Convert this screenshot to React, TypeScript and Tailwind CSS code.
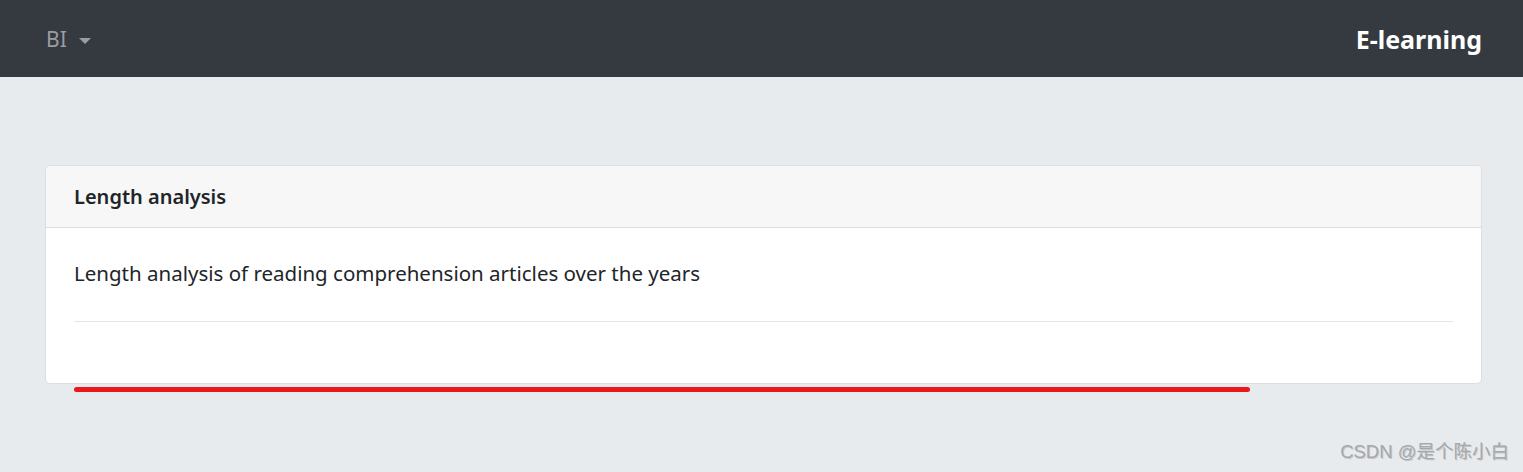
import React from "react";

export default function App() {
  return (
    <div className="w-[1523px] h-[472px] bg-[#e7ebee] flex flex-col relative" style={{ fontFamily: '"Noto Sans", "Open Sans", sans-serif' }}>
      <nav className="h-[77px] bg-[#343a40] flex items-center justify-between pl-[46px] pr-[41px] pt-[3px] shrink-0">
        <div className="flex items-center gap-[12px] text-[#9a9da1] text-[21px]">
          <span>BI</span>
          <span className="w-0 h-0 border-l-[6px] border-r-[6px] border-t-[6px] border-l-transparent border-r-transparent border-t-[#9a9da1] mt-[1px]" />
        </div>
        <div className="text-white text-[25px] font-bold">E-learning</div>
      </nav>
      <div className="pt-[88px] px-[45px] pr-[41px]">
        <div className="bg-white border border-[#dcdfe2] rounded-[5px]">
          <div className="h-[62px] bg-[#f7f7f7] border-b border-[#dcdfe2] flex items-center px-[28px] rounded-t-[5px]">
            <span className="text-[20px] font-semibold text-[#212529]">Length analysis</span>
          </div>
          <div className="px-[28px] pt-[30px] pb-[61px]">
            <p className="text-[20.5px] text-[#212529] leading-[30px]">Length analysis of reading comprehension articles over the years</p>
            <div className="mt-[33px] border-t border-[#e3e5e7]" />
          </div>
        </div>
        <div className="ml-[29px] mt-[3px] w-[1176px] h-[5px] bg-[#e8191d] rounded-full" />
      </div>
      <div className="absolute right-[14px] bottom-[6px] text-[#a8a8a8] text-[18.5px] font-normal" style={{ fontFamily: '"Liberation Sans", "Noto Sans CJK SC", sans-serif', fontWeight: 400, textShadow: "1px 1px 0 rgba(90,90,90,0.25)" }}>CSDN @是个陈小白</div>
    </div>
  );
}
